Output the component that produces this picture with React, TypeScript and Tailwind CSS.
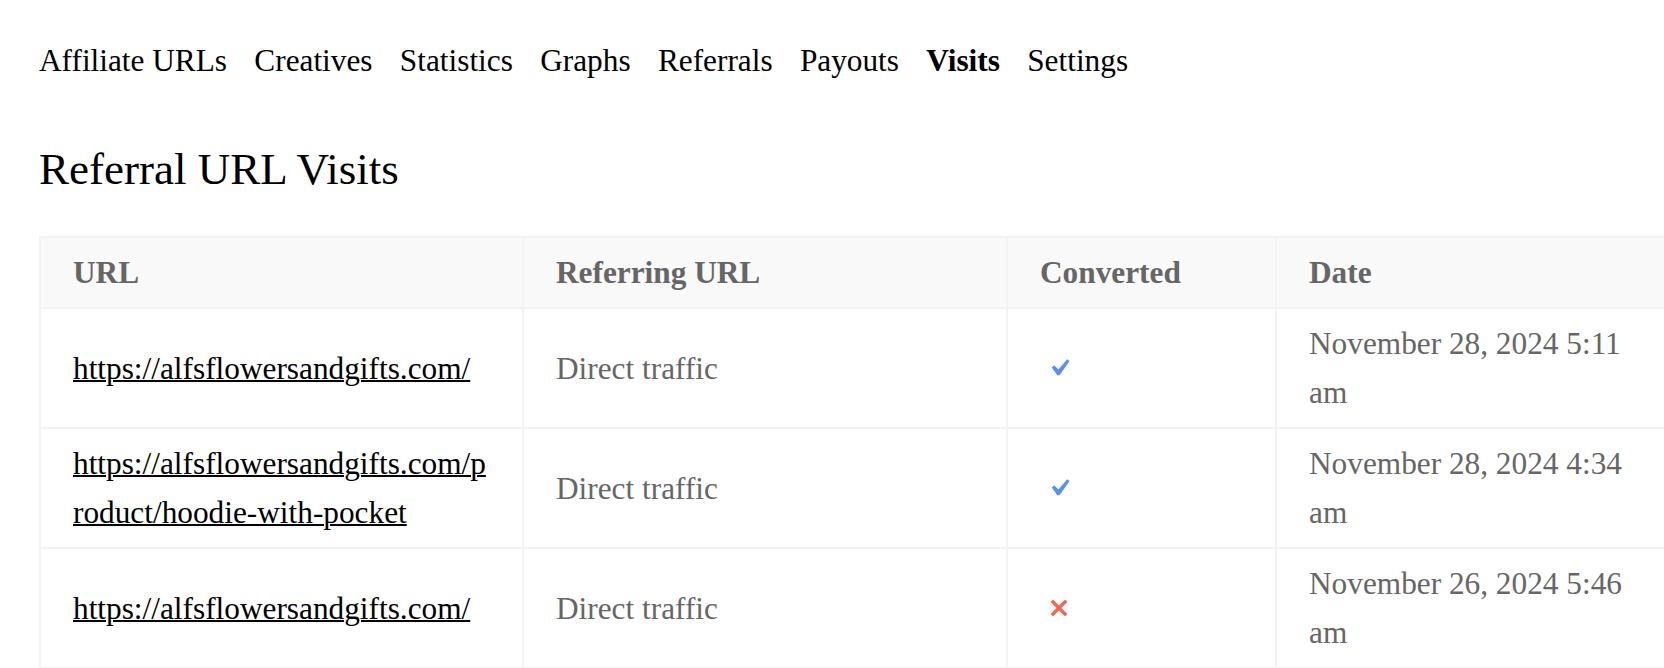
import React from "react";

type Visit = {
  url: string;
  referrer: string;
  converted: boolean;
  date: string;
};

const visits: Visit[] = [
  {
    url: "https://alfsflowersandgifts.com/",
    referrer: "Direct traffic",
    converted: true,
    date: "November 28, 2024 5:11 am",
  },
  {
    url: "https://alfsflowersandgifts.com/product/hoodie-with-pocket",
    referrer: "Direct traffic",
    converted: true,
    date: "November 28, 2024 4:34 am",
  },
  {
    url: "https://alfsflowersandgifts.com/",
    referrer: "Direct traffic",
    converted: false,
    date: "November 26, 2024 5:46 am",
  },
];

const tabs = [
  "Affiliate URLs",
  "Creatives",
  "Statistics",
  "Graphs",
  "Referrals",
  "Payouts",
  "Visits",
  "Settings",
];

function YesIcon() {
  return (
    <svg viewBox="0 0 20 20" className="block w-[34px] h-[34px]" aria-hidden="true">
      <path
        fill="#5b8ef0"
        d="M14.83 4.89l1.34.94-5.81 8.38H9.02L5.78 9.67l1.34-1.25 2.57 2.4z"
      />
    </svg>
  );
}

function NoIcon() {
  return (
    <svg viewBox="0 0 20 20" className="block w-[34px] h-[34px]" aria-hidden="true">
      <path
        fill="#f0675a"
        d="M14.95 6.46L11.41 10l3.54 3.54-1.41 1.41L10 11.42l-3.53 3.53-1.42-1.42L8.58 10 5.05 6.47l1.42-1.42L10 8.58l3.54-3.53z"
      />
    </svg>
  );
}

export default function App() {
  return (
    <div className="min-h-screen w-full overflow-hidden bg-white font-['Liberation_Serif','Times_New_Roman',serif] text-[31.3px] leading-[49px] text-black">
      <div className="pl-[39px] pt-[36px]">
        <nav>
          <ul className="flex gap-[27.3px] whitespace-nowrap">
            {tabs.map((t) => (
              <li key={t} className={t === "Visits" ? "font-bold" : ""}>
                {t}
              </li>
            ))}
          </ul>
        </nav>

        <h2 className="mt-[58px] text-[45px] leading-[53px] font-normal">
          Referral URL Visits
        </h2>

        <table className="mt-[40px] w-[1636px] table-fixed border-collapse border-2 border-[#f3f3f3]">
          <colgroup>
            <col className="w-[483px]" />
            <col className="w-[484px]" />
            <col className="w-[269px]" />
            <col className="w-[400px]" />
          </colgroup>
          <thead>
            <tr className="bg-[#f9f9f9]">
              {["URL", "Referring URL", "Converted", "Date"].map((h) => (
                <th
                  key={h}
                  className="border-2 border-[#f3f3f3] px-[32px] py-[10px] text-left font-bold text-[#666666]"
                >
                  {h}
                </th>
              ))}
            </tr>
          </thead>
          <tbody>
            {visits.map((v, i) => (
              <tr key={i}>
                <td className="border-2 border-[#f3f3f3] px-[32px] py-[10px] align-middle break-all">
                  <a href="#" className="text-black underline decoration-[2px]">
                    {v.url}
                  </a>
                </td>
                <td className="border-2 border-[#f3f3f3] px-[32px] py-[10px] align-middle text-[#666666]">
                  {v.referrer}
                </td>
                <td className="border-2 border-[#f3f3f3] pl-[34px] pr-[32px] py-[10px] align-middle">
                  {v.converted ? <YesIcon /> : <NoIcon />}
                </td>
                <td className="border-2 border-[#f3f3f3] px-[32px] py-[10px] align-middle text-[#666666]">
                  {v.date}
                </td>
              </tr>
            ))}
          </tbody>
        </table>
      </div>
    </div>
  );
}
